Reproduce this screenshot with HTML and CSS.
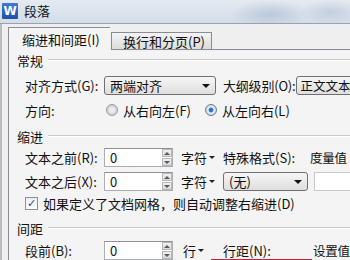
FILE: index.html
```html
<!DOCTYPE html>
<html lang="zh-CN">
<head>
    <meta charset="UTF-8">
    <title>段落</title>
    <link rel="stylesheet" href="styles.css">
</head>
<body>
    <div class="window">
        <div class="titlebar">
            <span class="app-icon">W</span>
            <span class="title">段落</span>
        </div>

        <div class="dialog">
            <div class="tabs">
                <div class="tab active">缩进和间距(I)</div>
                <div class="tab">换行和分页(P)</div>
                <div class="tab-rest"></div>
            </div>

            <div class="panel">
                <div class="group g1"><span>常规</span><i class="rule"></i></div>
                <div class="row r1">
                    <span class="label">对齐方式(G):</span>
                    <div class="select sel-align"><span>两端对齐</span><b class="arrow"></b></div>
                    <span class="label-2">大纲级别(O):</span>
                    <div class="select sel-level"><span>正文文本</span></div>
                </div>
                <div class="row r2">
                    <span class="label">方向:</span>
                    <span class="radio"></span><span class="opt">从右向左(F)</span>
                    <span class="radio checked"></span><span class="opt">从左向右(L)</span>
                </div>

                <div class="group g2"><span>缩进</span><i class="rule"></i></div>
                <div class="row">
                    <span class="label">文本之前(R):</span>
                    <div class="spin"><span>0</span><div class="spin-btns"><b class="up"></b><b class="down"></b></div></div>
                    <span class="unit">字符<b class="caret"></b></span>
                    <span class="label-3">特殊格式(S):</span>
                    <span class="label-4">度量值</span>
                </div>
                <div class="row">
                    <span class="label">文本之后(X):</span>
                    <div class="spin"><span>0</span><div class="spin-btns"><b class="up"></b><b class="down"></b></div></div>
                    <span class="unit">字符<b class="caret"></b></span>
                    <div class="select sel-special"><span>(无)</span><b class="arrow"></b></div>
                    <div class="field"></div>
                </div>
                <div class="row r-check">
                    <span class="checkbox">&#10003;</span>
                    <span>如果定义了文档网格，则自动调整右缩进(D)</span>
                </div>

                <div class="group g3"><span>间距</span><i class="rule"></i></div>
                <div class="row r6">
                    <span class="label">段前(B):</span>
                    <div class="spin"><span>0</span><div class="spin-btns"><b class="up"></b><b class="down"></b></div></div>
                    <span class="unit unit-line">行<b class="caret"></b></span>
                    <span class="label-5">行距(N):</span>
                    <span class="label-4">设置值</span>
                </div>
            </div>
        </div>
    </div>
</body>
</html>
```

FILE: styles.css
```css
* {
    margin: 0;
    padding: 0;
    box-sizing: border-box;
}

body {
    width: 350px;
    height: 260px;
    overflow: hidden;
    background: #efefef;
    font-family: "Noto Sans CJK SC", "Noto Sans", sans-serif;
    font-size: 13px;
    color: #111;
}

.window {
    height: 260px;
    display: flex;
    flex-direction: column;
}

/* title bar */
.titlebar {
    height: 24px;
    flex: none;
    display: flex;
    align-items: center;
    padding-left: 2px;
    border-bottom: 1px solid #9aa3ad;
    background:
        radial-gradient(ellipse 40px 14px at 270px 14px, rgba(150, 170, 200, 0.45), transparent),
        radial-gradient(ellipse 30px 12px at 330px 12px, rgba(160, 175, 205, 0.4), transparent),
        linear-gradient(to bottom, #e4eaf1, #d3dde8);
}

.app-icon {
    width: 16px;
    height: 16px;
    margin-top: -2px;
    background: linear-gradient(#3f7ad6, #1f4fae);
    color: #fff;
    font-family: "DejaVu Sans", sans-serif;
    font-weight: bold;
    font-size: 12px;
    line-height: 16px;
    text-align: center;
    border-radius: 1px;
}

.title {
    margin-left: 6px;
    margin-top: -2px;
}

/* dialog */
.dialog {
    flex: 1;
    border-left: 2px solid #b9bcc0;
    padding: 3px 0 0 6px;
}

.tabs {
    display: flex;
    align-items: flex-end;
    height: 23px;
}

.tab {
    width: 101px;
    height: 18px;
    margin-left: 1px;
    padding: 0 7px 0 11px;
    border: 1px solid #898c95;
    background: linear-gradient(#f4f4f4, #dcdcdc);
    display: flex;
    align-items: center;
    white-space: nowrap;
}

.tab.active {
    width: 102px;
    height: 24px;
    margin-left: 0;
    margin-bottom: -1px;
    padding-left: 13px;
    background: #f4f4f4;
    border-right: none;
    border-bottom: none;
    position: relative;
    z-index: 1;
}

.tab-rest {
    flex: 1;
    height: 1px;
    border-bottom: 1px solid #898c95;
}

.panel {
    height: 220px;
    border-left: 1px solid #898c95;
    background: #f4f4f4;
    padding-left: 8px;
}

/* group headings */
.group {
    height: 18px;
    display: flex;
    align-items: center;
}

.group span {
    margin-right: 5px;
}

.group .rule {
    flex: 1;
    height: 2px;
    background: #c8c8c8;
    border-bottom: 1px solid #fff;
}

.g1 { margin-top: 1px; }
.g2 { margin-top: 5px; }
.g3 { margin-top: 6px; }

/* rows */
.row {
    height: 24px;
    display: flex;
    align-items: center;
    padding-left: 8px;
    white-space: nowrap;
}

.r1 { margin-top: 4px; }
.r2 { margin-top: 1px; }
.r6 { margin-top: 1px; }

.label {
    width: 79px;
    flex: none;
}

.label-2 { margin-left: 7px; margin-right: 1px; flex: none; letter-spacing: -0.2px; }
.label-3 { margin-left: 9px; width: 87px; flex: none; }
.label-4 { flex: none; font-size: 12.5px; letter-spacing: -0.3px; }
.label-5 { margin-left: 11px; width: 90px; flex: none; position: relative; }

.select {
    height: 19px;
    border: 1px solid #707070;
    border-radius: 3px;
    background: linear-gradient(#f6f6f6, #dedede);
    display: flex;
    align-items: center;
    padding-left: 5px;
    flex: none;
    position: relative;
}

.sel-align { width: 112px; }
.sel-level { width: 62px; padding-left: 3px; font-size: 12.5px; }
.sel-special { width: 85px; margin-left: 9px; }

.arrow {
    position: absolute;
    right: 5px;
    top: 7px;
    border-left: 4px solid transparent;
    border-right: 4px solid transparent;
    border-top: 4px solid #111;
}

.radio {
    width: 12px;
    height: 12px;
    border-radius: 50%;
    border: 1px solid #9a9a9a;
    background: radial-gradient(circle, #ececec 30%, #cfcfcf 70%);
    margin-left: 2px;
    flex: none;
}

.radio.checked {
    margin-left: 14px;
    background: radial-gradient(circle, #1c5fa8 0, #3b8ad8 30%, #e8eef5 40%, #cfd6de 70%);
    border-color: #6a7c90;
}

.opt { margin-left: 5px; }

.spin {
    width: 69px;
    height: 19px;
    border: 1px solid #abadb3;
    border-top-color: #8d9096;
    background: #fff;
    display: flex;
    align-items: center;
    padding-left: 5px;
    flex: none;
}

.spin span { flex: 1; }

.spin-btns {
    width: 10px;
    height: 17px;
    display: flex;
    flex-direction: column;
    gap: 1px;
}

.spin-btns b {
    flex: 1;
    background: linear-gradient(#f2f2f2, #d8d8d8);
    border: 1px solid #b8b8b8;
    position: relative;
}

.spin-btns b::after {
    content: "";
    position: absolute;
    left: 1px;
    top: 2px;
    border-left: 3px solid transparent;
    border-right: 3px solid transparent;
}

.spin-btns .up::after { border-bottom: 3px solid #5a5a5a; }
.spin-btns .down::after { border-top: 3px solid #5a5a5a; }

.unit {
    margin-left: 8px;
    width: 33px;
    flex: none;
    display: flex;
    align-items: center;
}

.unit-line { margin-left: 10px; width: 29px; }

.caret {
    margin-left: 2px;
    border-left: 3px solid transparent;
    border-right: 3px solid transparent;
    border-top: 3px solid #222;
}

.field {
    width: 45px;
    height: 19px;
    margin-left: 6px;
    border: 1px solid #c5c8cc;
    background: #fff;
    flex: none;
}

.r-check {
    height: 20px;
}

.checkbox {
    width: 13px;
    height: 13px;
    border: 1px solid #8e8f8f;
    background: linear-gradient(#e9eef3, #fff);
    color: #2a4f94;
    font-family: "DejaVu Sans", sans-serif;
    font-size: 11px;
    font-weight: bold;
    line-height: 11px;
    text-align: center;
    margin-right: 5px;
    flex: none;
}

/* red mark under the line spacing label */
.label-5::after {
    content: "";
    position: absolute;
    left: -12px;
    top: 18px;
    width: 101px;
    height: 4px;
    background: #c42330;
}
```
